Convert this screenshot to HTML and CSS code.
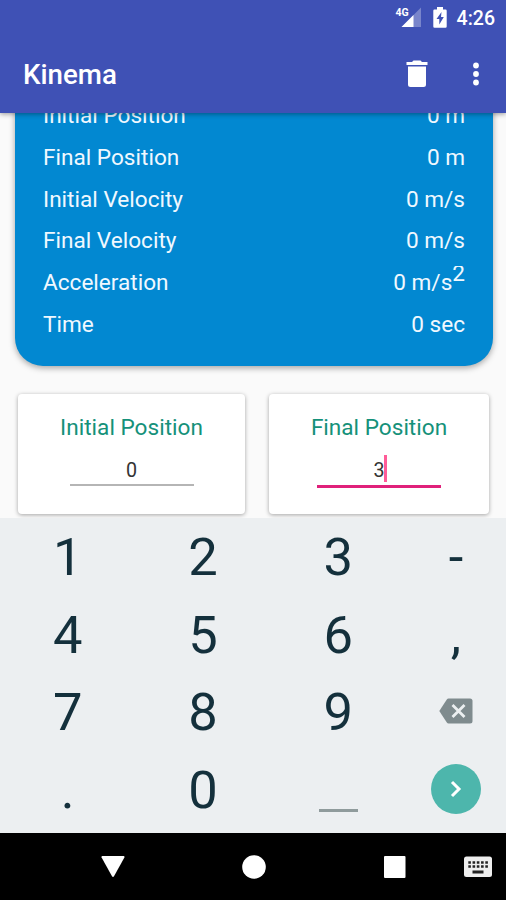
FILE: index.html
```html
<!DOCTYPE html>
<html lang="en">
<head>
<meta charset="utf-8">
<title>Kinema</title>
<link rel="stylesheet" href="styles.css">
</head>
<body>
<div class="screen">
  <header class="top">
    <div class="status">
      <svg class="signal" width="27" height="23" viewBox="0 0 27 23">
        <path d="M26 3.500V23H6.500z" fill="#fff" opacity=".3"/>
        <path d="M18.500 11V23H6.500z" fill="#fff"/>
        <text class="net" x="0.500" y="12">4G</text>
      </svg>
      <svg class="battery" width="14" height="22" viewBox="0 0 14 22">
        <path d="M4 0h6v2.500H12.500a1.200 1.200 0 0 1 1.200 1.200V19.500a1.200 1.200 0 0 1-1.200 1.200H1.500A1.200 1.200 0 0 1 .3 19.500V3.700a1.200 1.200 0 0 1 1.200-1.200H4z" fill="#fff"/>
        <path d="M8.500 5L3.500 12H6.300v5.500L10.800 10H8z" fill="#3f51b5"/>
      </svg>
      <span class="clock">4:26</span>
    </div>
    <div class="appbar">
      <h1 class="title">Kinema</h1>
      <svg class="trash" width="22" height="28" viewBox="0 0 22 28">
        <path d="M.500 2H6l1.500-1.500h7L16 2h5.500v3H.500zM2 6.500h18V24.500a2.500 2.500 0 0 1-2.500 2.500h-13A2.500 2.500 0 0 1 2 24.500z" fill="#fff"/>
      </svg>
      <svg class="more" width="8" height="24" viewBox="0 0 8 24">
        <circle cx="4" cy="3.500" r="2.900" fill="#fff"/><circle cx="4" cy="12" r="2.900" fill="#fff"/><circle cx="4" cy="20.500" r="2.900" fill="#fff"/>
      </svg>
    </div>
  </header>

  <main class="content">
    <section class="summary">
      <div class="row"><span>Initial Position</span><span>0 m</span></div>
      <div class="row"><span>Final Position</span><span>0 m</span></div>
      <div class="row"><span>Initial Velocity</span><span>0 m/s</span></div>
      <div class="row"><span>Final Velocity</span><span>0 m/s</span></div>
      <div class="row"><span>Acceleration</span><span class="accel">0 m/s<span class="sup">2</span></span></div>
      <div class="row"><span>Time</span><span>0 sec</span></div>
    </section>
    <div class="cards">
      <section class="card">
        <div class="label">Initial Position</div>
        <div class="field">0</div>
      </section>
      <section class="card">
        <div class="label">Final Position</div>
        <div class="field focused">3<i class="caret"></i></div>
      </section>
    </div>
  </main>

  <div class="keyboard">
    <div class="key">1</div><div class="key">2</div><div class="key">3</div><div class="key">-</div>
    <div class="key">4</div><div class="key">5</div><div class="key">6</div><div class="key">,</div>
    <div class="key">7</div><div class="key">8</div><div class="key">9</div>
    <div class="key icon">
      <svg width="34" height="26" viewBox="0 0 34 26">
        <path d="M9.500 .500H31a2.500 2.500 0 0 1 2.500 2.500V23a2.500 2.500 0 0 1-2.500 2.500H9.500q-1 0-1.700-1L.300 13 7.800 1.500q.7-1 1.700-1z" fill="#7f8b8e"/>
        <path d="M13.500 7l12 12M25.500 7l-12 12" stroke="#eceff1" stroke-width="2.800"/>
      </svg>
    </div>
    <div class="key">.</div><div class="key">0</div>
    <div class="key"><i class="space"></i></div>
    <div class="key icon">
      <span class="go"><svg width="12" height="18" viewBox="0 0 12 18"><path d="M2 2l7 7-7 7" fill="none" stroke="#fff" stroke-width="3"/></svg></span>
    </div>
  </div>

  <nav class="navbar">
    <svg width="24" height="22" viewBox="0 0 24 22"><path d="M1.300 0H22.700q1.300.3.700 1.500L13 20.300q-1 1.500-2 0L.600 1.500Q0 .3 1.300 0z" fill="#fff"/></svg>
    <svg width="24" height="24" viewBox="0 0 24 24"><circle cx="12" cy="12" r="11.800" fill="#fff"/></svg>
    <svg width="22" height="22" viewBox="0 0 22 22"><rect width="21.500" height="22" rx="1" fill="#fff"/></svg>
    <svg width="28" height="22" viewBox="0 0 28 22">
      <rect x="0" y="0.500" width="28" height="20.500" rx="2.500" fill="#eee"/>
      <path d="M4.300 6.500h20M4.300 10.500h20" stroke="#222" stroke-width="2.500" stroke-dasharray="2.600 1.650"/>
      <rect x="8.500" y="14.500" width="11" height="3" fill="#222"/>
    </svg>
  </nav>
</div>
</body>
</html>
```

FILE: styles.css
```css
* { box-sizing: border-box; }

body {
  margin: 0;
  font-family: Roboto, "Liberation Sans", sans-serif;
}

.screen {
  width: 506px;
  height: 900px;
  display: flex;
  flex-direction: column;
  background: #fafafa;
  overflow: hidden;
}

.top {
  height: 113px;
  flex: none;
  background: #3f51b5;
  color: #fff;
  box-shadow: 0 1px 5px rgba(0, 0, 0, .4);
  position: relative;
  z-index: 2;
}

.status {
  height: 35px;
  display: flex;
  justify-content: flex-end;
  padding-right: 11px;
}

.signal { margin: 4px 11px 0 0; }
.net { font: 700 10.500px Roboto, sans-serif; fill: #fff; }
.battery { margin: 7px 10px 0 0; }
.clock { font-size: 19.500px; font-weight: 500; line-height: 38px; }

.appbar {
  height: 78px;
  display: flex;
  align-items: center;
  padding: 0 26px 0 23px;
}

.title {
  margin: 2px 0 0;
  flex: 1;
  font-size: 27.700px;
  line-height: 32px;
  font-weight: 500;
}

.trash { margin-right: 44px; }

.content {
  height: 405px;
  flex: none;
  overflow: hidden;
}

.summary {
  margin: -40px 13px 0 15px;
  height: 293px;
  padding: 22px 28px 0;
  border-radius: 0 0 28px 28px;
  background: #0288d1;
  box-shadow: 0 2px 6px rgba(0, 0, 0, .35);
  color: #f0f8ff;
}

.row {
  height: 41.800px;
  display: flex;
  justify-content: space-between;
  font-size: 22.600px;
  line-height: 42px;
}

.accel { display: flex; }

.sup {
  height: 26px;
  margin-top: 4px;
  line-height: 15px;
  overflow: hidden;
}

.cards {
  display: flex;
  gap: 24px;
  padding: 28px 17px 0 18px;
}

.card {
  width: 227px;
  height: 120px;
  padding-top: 20px;
  border-radius: 4px;
  background: #fff;
  box-shadow: 0 1px 4px rgba(0, 0, 0, .35);
  text-align: center;
}

.card + .card { width: 220px; }

.label {
  margin-bottom: -1px;
  font-size: 22.600px;
  line-height: 28px;
  color: #15917a;
}

.field {
  width: 124px;
  height: 45px;
  margin: 0 auto;
  padding-top: 16px;
  border-bottom: 2px solid #b5b5b5;
  font-size: 19.700px;
  line-height: 28px;
  color: #333;
}

.focused {
  height: 47px;
  border-bottom: 3px solid #e0207a;
  position: relative;
}

.caret {
  position: absolute;
  left: 67px;
  top: 14px;
  width: 3px;
  height: 27px;
  background: #ff5c98;
}

.keyboard {
  height: 315px;
  flex: none;
  display: grid;
  grid-template-columns: 135.300px 135.300px 135.300px 100px;
  grid-template-rows: repeat(4, 77.500px);
  padding-top: 1px;
  background: #eceff1;
  color: #14303c;
}

.key {
  display: flex;
  justify-content: center;
  align-items: center;
  font-size: 52.500px;
  line-height: 77px;
}

.icon { padding-bottom: 3px; }

.space {
  width: 39px;
  height: 3px;
  margin-top: 41px;
  background: #8f9b9c;
}

.go {
  width: 50px;
  height: 50px;
  border-radius: 50%;
  background: #4db6ac;
  display: flex;
  justify-content: center;
  align-items: center;
}

.navbar {
  height: 67px;
  flex: none;
  background: #000;
  display: flex;
  align-items: center;
  padding-left: 101px;
}

.navbar svg:nth-child(2) { margin-left: 117px; }
.navbar svg:nth-child(3) { margin-left: 118px; }
.navbar svg:nth-child(4) { margin-left: 58px; }
```
